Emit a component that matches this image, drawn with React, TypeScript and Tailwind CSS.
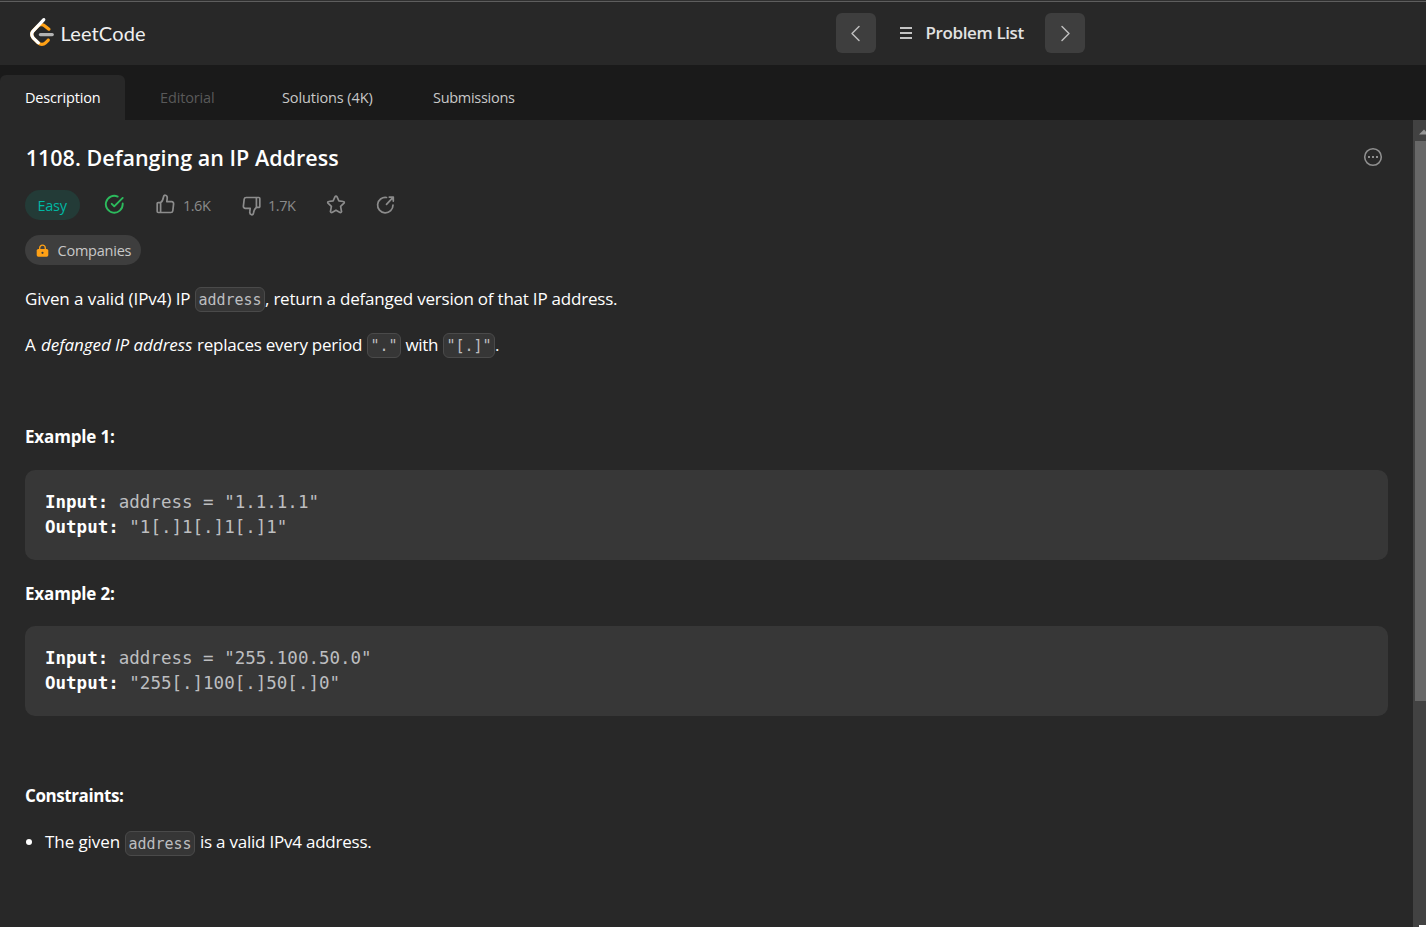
import type { ReactNode } from "react";

function Logo() {
  return (
    <svg width="24" height="28" viewBox="0 0 95 111" fill="none">
      <path
        d="M68.0063 83.0664C70.5 80.5764 74.5366 80.5829 77.0223 83.0809C79.508 85.579 79.5015 89.6226 77.0078 92.1127L65.9346 103.17C55.7187 113.371 39.06 113.519 28.6718 103.513C28.6117 103.456 23.9861 98.9201 8.72653 83.957C-1.42528 74.0029 -2.43665 58.0749 7.11648 47.8464L24.9282 28.7745C34.4095 18.6219 51.887 17.5122 62.7275 26.2789L78.9048 39.362C81.6444 41.5776 82.0723 45.5985 79.8606 48.3429C77.6488 51.0873 73.635 51.5159 70.8954 49.3003L54.7182 36.2173C49.0488 31.6325 39.1314 32.2622 34.2394 37.5006L16.4274 56.5727C11.7767 61.5522 12.2861 69.574 17.6456 74.8292C28.851 85.8169 37.4869 94.2846 37.4969 94.2942C42.8977 99.496 51.6304 99.4184 56.9331 94.1234L68.0063 83.0664Z"
        fill="#FFA116"
      />
      <path
        d="M41.1067 72.0014C37.5858 72.0014 34.7314 69.1421 34.7314 65.615C34.7314 62.0879 37.5858 59.2286 41.1067 59.2286H88.1245C91.6454 59.2286 94.4997 62.0879 94.4997 65.615C94.4997 69.1421 91.6454 72.0014 88.1245 72.0014H41.1067Z"
        fill="#B3B3B3"
      />
      <path
        d="M49.9118 2.02335C52.3173 -0.55232 56.3517 -0.686894 58.9228 1.72277C61.494 4.13244 61.6284 8.17385 59.2229 10.7495L16.4276 56.5729C11.7768 61.552 12.2861 69.5738 17.6453 74.8292L37.4088 94.2091C39.9249 96.6764 39.968 100.72 37.505 103.24C35.042 105.761 31.0056 105.804 28.4895 103.337L8.72593 83.9567C-1.42529 74.0021 -2.43665 58.0741 7.1169 47.8463L49.9118 2.02335Z"
        fill="#fff"
      />
    </svg>
  );
}

function NavButton({ d }: { d: string }) {
  return (
    <button className="flex h-10 w-10 items-center justify-center rounded-[6px] bg-[#3e3e3e]">
      <svg width="40" height="40" fill="none" stroke="#bdbdbd" strokeWidth="1.5" strokeLinecap="round" strokeLinejoin="round">
        <path d={d} />
      </svg>
    </button>
  );
}

const THUMB =
  "M5.6 8.600H3.100a.9.9 0 0 0-.9.9v8.100c0 .5.4.9.9.9h2.500M5.600 8.600V18.500M5.600 8.600C7.400 7.600 8.100 5.400 8.500 3c.3-1.500 1.100-2 2-1.700 1.300.4 1.900 1.600 1.700 3l-.4 3.400h4.900a1.900 1.900 0 0 1 1.900 2.100l-.8 7A2 2 0 0 1 15.800 18.500H5.600";

function Thumb({ className = "" }: { className?: string }) {
  return (
    <svg width="21" height="21" viewBox="0 0 21 21" className={className} fill="none" stroke="#8c8c8c" strokeWidth="1.7" strokeLinecap="round" strokeLinejoin="round">
      <path d={THUMB} />
    </svg>
  );
}

function Code({ children, className = "" }: { children: ReactNode; className?: string }) {
  return (
    <code
      className={`relative top-[0.5px] flex h-[25px] shrink-0 items-center justify-center rounded-[6px] border border-[#4a4a4a] bg-[#363636] pt-px font-['DejaVu_Sans_Mono',monospace] text-[15px] leading-[22px] text-[#bdbec0] ${className}`}
    >
      {children}
    </code>
  );
}

function Row({ children, className = "" }: { children?: ReactNode; className?: string }) {
  return <div className={`flex h-[26.25px] items-center whitespace-pre ${className}`}>{children}</div>;
}

function Example({ input, output }: { input: string; output: string }) {
  return (
    <pre className="mt-[19.5px] mb-[20.5px] h-[90px] w-[1363px] rounded-[10px] bg-[#373737] p-5 font-['DejaVu_Sans_Mono',monospace] text-[17.5px] leading-[25px] text-[#bdbec0]">
      <strong className="font-bold text-white">Input:</strong> address = {input}
      {"\n"}
      <strong className="font-bold text-white">Output:</strong> {output}
    </pre>
  );
}

export default function App() {
  return (
    <div className="flex h-[927px] w-[1426px] flex-col overflow-hidden bg-[#282828] font-['Open_Sans',sans-serif] text-white">
      <header className="flex h-[65px] shrink-0 flex-col">
        <div className="h-px bg-[#303030]" />
        <div className="h-px bg-[#5e5e5e]" />
        <div className="flex h-[62px] items-center">
          <div className="flex w-[835.5px] items-center pl-[30px]">
            <div className="-mt-0.5">
              <Logo />
            </div>
            <span className="ml-[6.500px] font-['Lato',sans-serif] text-[20px] leading-6 tracking-[0.15px] text-[#f0f0f0]">LeetCode</span>
          </div>
          <NavButton d="M23 13.500 16 20.500 23 27.500" />
          <svg className="ml-[23px]" width="14" height="14" fill="none" stroke="#c4c4c4" strokeWidth="1.8">
            <path d="M1 2h12M1 7h12M1 12h12" />
          </svg>
          <span className="ml-[13px] w-[119px] text-[17px] leading-6 font-semibold tracking-[-0.379px] text-[#e2e2e2]">Problem List</span>
          <NavButton d="M17 13.500 24 20.500 17 27.500" />
        </div>
      </header>

      <nav className="flex h-[55px] shrink-0 items-end bg-[#1a1a1a] text-[14.5px] leading-[45px] text-[#c8c8c8]">
        <div className="h-[45px] w-[125px] rounded-t-[6px] bg-[#282828] pl-[25px] tracking-[-0.18px] text-white">Description</div>
        <div className="h-[45px] w-[157px] pl-[35px] tracking-[-0.14px] text-[#595959]">Editorial</div>
        <div className="h-[45px] w-[151px] tracking-[-0.1px]">Solutions (4K)</div>
        <div className="h-[45px] tracking-[-0.29px]">Submissions</div>
      </nav>

      <div className="flex min-h-0 flex-1">
        <main className="flex w-[1413px] flex-col pl-[25px]">
          <div className="flex h-[70px] items-center justify-between pt-1.5 pr-[30px]">
            <h1 className="ml-[0.7px] text-[21.5px] leading-7 font-semibold tracking-[0.019px]">1108. Defanging an IP Address</h1>
            <svg className="-mt-[3px]" width="20" height="20" fill="none" stroke="#8f8f8f" strokeWidth="1.6">
              <circle cx="10" cy="10" r="8.300" />
              <path d="M5 10h2M9 10h2M13 10h2" strokeWidth="2" />
            </svg>
          </div>

          <div className="flex h-[30px] items-center text-[14.5px] leading-[30px] text-[#8a8a8a]">
            <div className="h-[30px] w-[55px] rounded-full bg-[#233b37] pt-px pl-[12.5px] font-medium tracking-[-0.25px] text-[#00b8a3]">Easy</div>
            <svg className="mt-[-1px] ml-[23px]" width="22.500" height="22.500" viewBox="0 0 24 24" fill="#2cbb5d">
              <path
                fillRule="evenodd"
                clipRule="evenodd"
                d="M20 12.005v-.828a1 1 0 112 0v.829a10 10 0 11-5.93-9.14 1 1 0 01-.814 1.826A8 8 0 1020 12.005zM8.593 10.852a1 1 0 011.414 0L12 12.844l8.293-8.300a1 1 0 011.415 1.413l-9 9.009a1 1 0 01-1.415 0l-2.700-2.700a1 1 0 010-1.414z"
              />
            </svg>
            <Thumb className="mt-[-2px] ml-[29.5px]" />
            <span className="mt-px ml-[7px] w-[46px] tracking-[-0.5px]">1.6K</span>
            <Thumb className="mt-[1px] ml-[11.500px] rotate-180" />
            <span className="mt-px ml-[6.5px] w-[45px] tracking-[-0.45px]">1.7K</span>
            <svg className="ml-[11.5px]" width="22" height="22" viewBox="0 0 22 22" fill="none" stroke="#8c8c8c" strokeWidth="1.7" strokeLinejoin="round">
              <path d="M10.100 2.700a1 1 0 0 1 1.800 0l2 4.200 4.500.6a1 1 0 0 1 .6 1.700l-3.400 3.200.9 4.900a1 1 0 0 1-1.500 1.100L11 16.200l-4 2.200a1 1 0 0 1-1.500-1.100l.9-4.900-3.400-3.200a1 1 0 0 1 .6-1.700l4.500-.6Z" />
            </svg>
            <svg className="ml-[28px]" width="22" height="22" viewBox="0 0 22 22" fill="none" stroke="#8c8c8c" strokeWidth="1.700" strokeLinecap="round" strokeLinejoin="round">
              <path d="M11.500 3.500a7.700 7.700 0 1 0 6.500 7.500M14.300 3.100h4v4M18 3.400l-6.500 7" />
            </svg>
          </div>

          <div className="mt-[15px] flex h-[30px] w-[116px] items-center rounded-full bg-[#3e3e3e] pl-[11px]">
            <svg className="mt-px" width="13" height="14" viewBox="0 0 13 14">
              <path d="M3.700 6V4a2.800 2.800 0 0 1 5.600 0v2" fill="none" stroke="#ffa116" strokeWidth="1.300" />
              <rect x="0.700" y="5" width="11.600" height="7.700" rx="1.600" fill="#ffa116" />
              <circle cx="6.500" cy="8.800" r="1.100" fill="#3e3e3e" />
            </svg>
            <span className="mt-px ml-[8.5px] text-[14.5px] leading-[30px] tracking-[-0.23px] text-[#c8c8c8]">Companies</span>
          </div>

          <div className="mt-[20.500px] text-[17px] leading-[26px]">
            <Row>
              <span className="w-[170px] tracking-[-0.08px]">Given a valid (IPv4) IP</span>
              <Code className="w-[70px]">address</Code>
              <span className="tracking-[-0.22px]">, return a defanged version of that IP address.</span>
            </Row>
            <Row className="mt-5">
              <span className="w-[16px]">A</span>
              <em className="w-[156px] tracking-[-0.052px]">defanged IP address</em>
              <span className="w-[170px] tracking-[-0.23px]">replaces every period</span>
              <Code className="w-[34px]">"."</Code>
              <span className="ml-[4.500px] w-[37.500px] tracking-[-0.3px]">with</span>
              <Code className="w-[52px]">"[.]"</Code>
              <span>.</span>
            </Row>
            <Row className="mt-5" />
            <Row className="mt-5 font-bold tracking-[-0.15px]">Example 1:</Row>
            <Example input={'"1.1.1.1"'} output={'"1[.]1[.]1[.]1"'} />
            <Row className="font-bold tracking-[-0.15px]">Example 2:</Row>
            <Example input={'"255.100.50.0"'} output={'"255[.]100[.]50[.]0"'} />
            <Row />
            <Row className="mt-5 font-bold tracking-[-0.413px]">Constraints:</Row>
            <Row className="mt-5">
              <span className="ml-px h-1.5 w-1.5 rounded-full bg-white" />
              <span className="ml-[13px] w-[80px] tracking-[-0.08px]">The given</span>
              <Code className="top-[1.500px] w-[70px]">address</Code>
              <span className="ml-[5px] tracking-[-0.23px]">is a valid IPv4 address.</span>
            </Row>
          </div>
        </main>

        <aside className="flex w-[13px] flex-col bg-[#424242]">
          <div className="flex h-[21px] items-center justify-end overflow-hidden pt-0.5">
            <svg width="7" height="6" fill="#969696">
              <path d="M0 5.500 5 .5l5 5Z" />
            </svg>
          </div>
          <div className="ml-0.5 h-[560px] bg-[#686868]" />
          <div className="mt-auto ml-1.5 h-0.5 bg-white" />
        </aside>
      </div>
    </div>
  );
}
